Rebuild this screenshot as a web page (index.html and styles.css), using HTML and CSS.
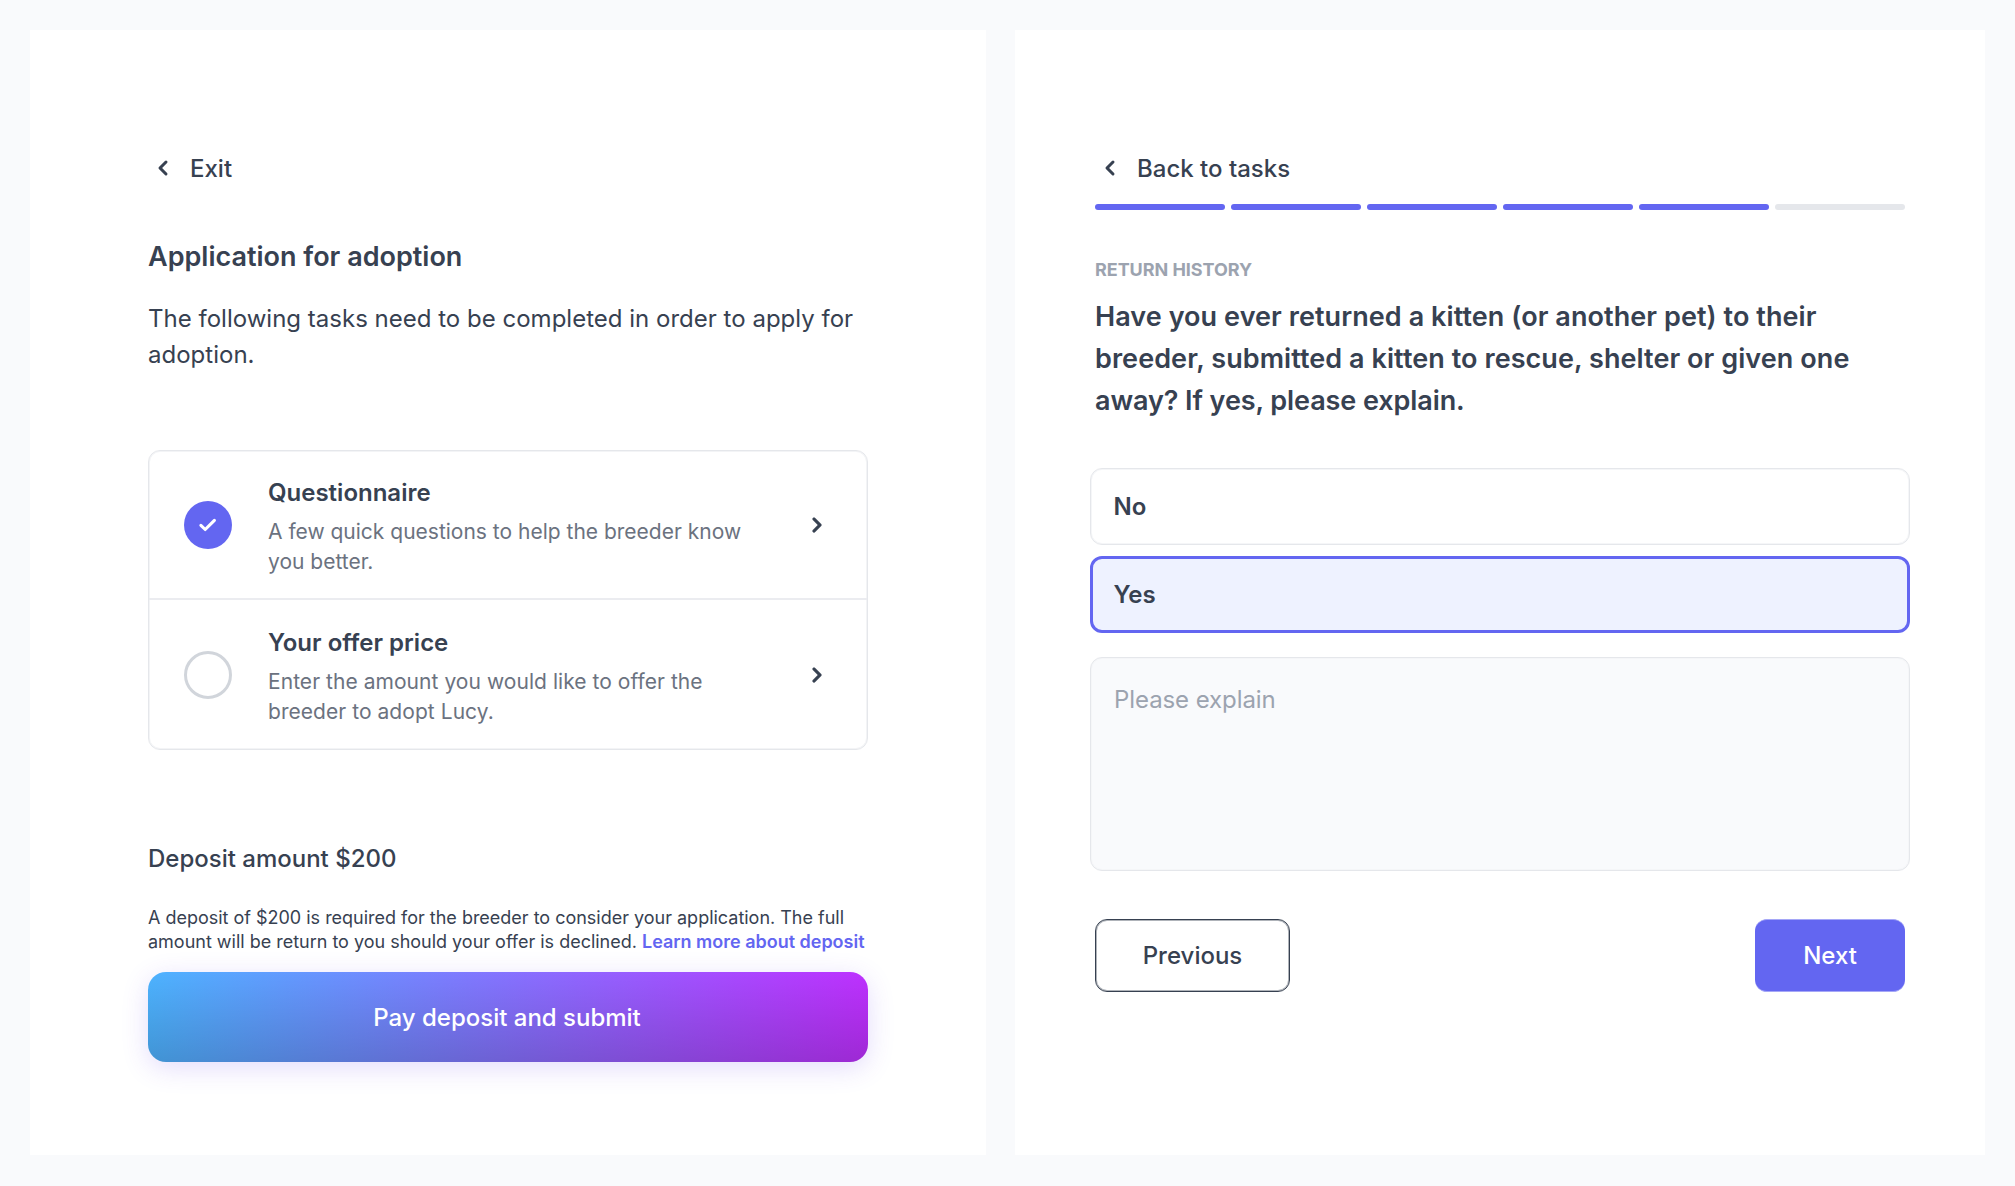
FILE: index.html
```html
<!DOCTYPE html>
<html lang="en">
<head>
<meta charset="utf-8">
<title>Application for adoption</title>
<link rel="stylesheet" href="styles.css">
</head>
<body>
<main class="board">
  <section class="panel panel-tasks">
    <a class="back">
      <svg class="chevron" viewBox="0 0 20 20"><path fill-rule="evenodd" clip-rule="evenodd" d="M12.707 5.293a1 1 0 010 1.414L9.414 10l3.293 3.293a1 1 0 01-1.414 1.414l-4-4a1 1 0 010-1.414l4-4a1 1 0 011.414 0z"/></svg>
      <span>Exit</span>
    </a>
    <h1 class="title">Application for adoption</h1>
    <p class="intro">The following tasks need to be completed in order to apply for<br>adoption.</p>
    <ul class="tasks">
      <li class="task">
        <span class="status status-done"><svg class="check" viewBox="0 0 24 24"><path d="M4.9 12.4L9.2 16.5L18.4 7.3"/></svg></span>
        <div class="task-text">
          <h2 class="task-title">Questionnaire</h2>
          <p class="task-desc">A few quick questions to help the breeder know<br>you better.</p>
        </div>
        <svg class="chevron chevron-bold" viewBox="0 0 20 20"><path fill-rule="evenodd" clip-rule="evenodd" d="M7.293 14.707a1 1 0 010-1.414L10.586 10 7.293 6.707a1 1 0 011.414-1.414l4 4a1 1 0 010 1.414l-4 4a1 1 0 01-1.414 0z"/></svg>
      </li>
      <li class="task">
        <span class="status"></span>
        <div class="task-text">
          <h2 class="task-title">Your offer price</h2>
          <p class="task-desc task-desc-loose">Enter the amount you would like to offer the<br>breeder to adopt Lucy.</p>
        </div>
        <svg class="chevron chevron-bold" viewBox="0 0 20 20"><path fill-rule="evenodd" clip-rule="evenodd" d="M7.293 14.707a1 1 0 010-1.414L10.586 10 7.293 6.707a1 1 0 011.414-1.414l4 4a1 1 0 010 1.414l-4 4a1 1 0 01-1.414 0z"/></svg>
      </li>
    </ul>
    <h2 class="deposit">Deposit amount $200</h2>
    <p class="note">A deposit of $200 is required for the breeder to consider your application. The full<br>amount will be return to you should your offer is declined. <a class="link">Learn more about deposit</a></p>
    <button class="pay" type="button">Pay deposit and submit</button>
  </section>

  <section class="panel panel-question">
    <a class="back">
      <svg class="chevron" viewBox="0 0 20 20"><path fill-rule="evenodd" clip-rule="evenodd" d="M12.707 5.293a1 1 0 010 1.414L9.414 10l3.293 3.293a1 1 0 01-1.414 1.414l-4-4a1 1 0 010-1.414l4-4a1 1 0 011.414 0z"/></svg>
      <span>Back to tasks</span>
    </a>
    <div class="progress">
      <span class="step"></span>
      <span class="step"></span>
      <span class="step"></span>
      <span class="step"></span>
      <span class="step"></span>
      <span class="step step-todo"></span>
    </div>
    <p class="eyebrow">RETURN HISTORY</p>
    <h1 class="question"><span class="loose">Have you ever returned a kitten (or another pet) to their<br>breeder, submitted a kitten to rescue, shelter or given one</span><br><span class="tight">away? If yes, please explain.</span></h1>
    <div class="answers">
      <div class="option">No</div>
      <div class="option option-selected">Yes</div>
      <div class="explain">Please explain</div>
    </div>
    <div class="actions">
      <button class="btn btn-outline" type="button">Previous</button>
      <button class="btn btn-primary" type="button">Next</button>
    </div>
  </section>
</main>
</body>
</html>
```
FILE: styles.css
```css
* { box-sizing: border-box; margin: 0; padding: 0; }

body {
  background: #f9fafc;
  color: #374151;
  font: 400 24px/36px Inter, sans-serif;
}

.board {
  display: grid;
  grid-template-columns: 956px 970px;
  gap: 29px;
  padding: 30px 30px 31px;
  height: 1186px;
}

.panel { background: #fff; }
.panel-tasks { padding: 121px 118px 0 118px; }
.panel-question { padding: 121px 0 0 80px; }

.back { display: flex; align-items: center; gap: 12px; font-weight: 500; }
.back .chevron { margin-top: -2px; }
.chevron { flex: none; width: 30px; height: 30px; fill: #374151; }
.chevron-bold { stroke: #374151; stroke-width: 0.2; }

/* Task list */
.title { font-size: 27px; font-weight: 600; line-height: 42px; margin-top: 49px; }
.intro { margin-top: 23px; letter-spacing: 0.01px; }

.tasks {
  list-style: none;
  width: 720px;
  height: 300px;
  margin-top: 77px;
  border: 1px solid #e5e7eb;
  border-radius: 12px;
  box-shadow: inset 0 0 0 1px #f3f4f6;
}
.task { display: flex; align-items: center; height: 149px; padding: 1px 35px 0; }
.task:first-child { border-bottom: 2px solid #ebecf0; }

.status {
  display: flex;
  align-items: center;
  justify-content: center;
  width: 48px;
  height: 48px;
  border: 3px solid #d1d5db;
  border-radius: 50%;
}
.status-done { background: #6366f1; border: 0; }
.check {
  width: 24px;
  height: 24px;
  fill: none;
  stroke: #fff;
  stroke-width: 3.1;
  stroke-linecap: round;
  stroke-linejoin: round;
}

.task-text { flex: 1; margin-left: 36px; padding-top: 2px; }
.task-title { font-size: 24px; font-weight: 600; line-height: 36px; }
.task-desc { margin-top: 6px; font-size: 21px; line-height: 30px; color: #6b7280; }
.task-desc-loose { letter-spacing: 0.05px; }

/* Deposit */
.deposit { font-size: 24px; font-weight: 500; margin-top: 91px; }
.note { font-size: 18px; line-height: 24px; margin-top: 29px; letter-spacing: -0.01px; }
.link { font-weight: 600; color: #6366f1; }
.pay {
  display: block;
  width: 720px;
  height: 90px;
  margin-top: 18px;
  padding: 28px 2px 26px 0;
  border: 0;
  border-radius: 18px;
  color: #fff;
  font: 500 24px/36px Inter, sans-serif;
  background:
    linear-gradient(180deg, rgba(0, 0, 0, 0), rgba(0, 0, 0, 0.17)),
    linear-gradient(92deg, #4db3ff, #be30ff);
  box-shadow: 0 6px 27px rgba(99, 60, 241, 0.18);
}

/* Question */
.progress { display: flex; gap: 6px; margin-top: 17px; }
.step { width: 130px; height: 6px; border-radius: 3px; background: #6366f1; }
.step-todo { background: #e5e7eb; }

.eyebrow { margin-top: 42px; font-size: 18px; font-weight: 700; letter-spacing: -0.05px; color: #9ca3af; }
.question { margin-top: 8px; font-size: 27px; font-weight: 600; line-height: 42px; }
.loose { letter-spacing: 0.07px; }
.tight { letter-spacing: -0.08px; }

.answers { width: 820px; margin: 46px 0 0 -5px; }
.option,
.explain {
  border: 1px solid #e5e7eb;
  border-radius: 12px;
  box-shadow: inset 0 0 0 1px #f5f6f8;
}
.option { height: 77px; padding: 20px 22.5px; font-weight: 600; }
.option-selected {
  margin-top: 11px;
  padding: 18px 20.5px;
  border: 3px solid #6366f1;
  background: #eef2ff;
  box-shadow: none;
}
.explain {
  height: 214px;
  margin-top: 24px;
  padding: 24px 23px;
  background: #f9fafc;
  color: #9ca3af;
  letter-spacing: -0.08px;
}

.actions { display: flex; justify-content: space-between; width: 810px; margin-top: 48px; }
.btn {
  height: 73px;
  padding: 17px 0;
  border-radius: 12px;
  font: 500 24px/36px Inter, sans-serif;
}
.btn-outline {
  width: 195px;
  border: 1px solid #374151;
  background: #fff;
  color: #374151;
  box-shadow: inset 0 0 0 1px rgba(55, 65, 81, 0.4);
}
.btn-primary {
  width: 150px;
  border: solid #a5a7f7;
  border-width: 1px 0;
  background: #6366f1;
  color: #fff;
}
```
